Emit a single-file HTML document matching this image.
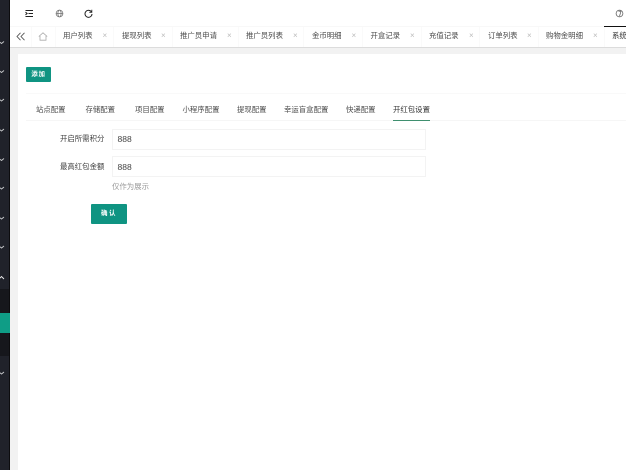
<!DOCTYPE html>
<html lang="zh">
<head>
<meta charset="utf-8">
<title>系统配置</title>
<style>
html,body{margin:0;padding:0;width:626px;height:470px;overflow:hidden;background:#fff}
body{position:relative;font-family:"Liberation Sans","Noto Sans CJK SC",sans-serif;font-size:7.4px;color:#4a4a4a}
.a{position:absolute;white-space:nowrap}
.t{line-height:10px;height:10px}
#wrap{position:absolute;left:0;top:0;width:626px;height:470px;overflow:hidden;filter:blur(.35px)}
.x{color:#bbb;font-size:8px}
.sep{position:absolute;top:27px;width:1px;height:20px;background:#fafafa}
</style>
</head>
<body>
<div id="wrap">
<!-- sidebar -->
<div class="a" style="left:0;top:0;width:9px;height:470px;background:#20222a"></div>
<div class="a" style="left:9px;top:0;width:1px;height:470px;background:#0c0c0e"></div>
<div class="a" style="left:0;top:289px;width:9px;height:67px;background:#16171c"></div>
<div class="a" style="left:0;top:313px;width:10px;height:20px;background:#0f9d86"></div>
<svg class="a" style="left:0;top:0" width="10" height="470" fill="none" stroke="#c8cacc" stroke-width=".9">
<path d="M-1 41.5l2.500 2 2.500-2M-1 70.500l2.500 2 2.500-2M-1 99l2.500 2 2.500-2M-1 129l2.500 2 2.500-2M-1 158.500l2.500 2 2.500-2M-1 187l2.500 2 2.500-2M-1 217l2.500 2 2.500-2M-1 246l2.500 2 2.500-2M-1 372l2.500 2 2.500-2"/>
<path d="M-1 279l2.500-2.500 2.500 2.500" stroke="#eee"/>
</svg>

<!-- background -->
<div class="a" style="left:10px;top:47px;width:616px;height:423px;background:#f2f2f2"></div>
<div class="a" style="left:10px;top:47px;width:616px;height:1px;background:#dcdcdc"></div>
<div class="a" style="left:18px;top:54px;width:608px;height:416px;background:#fff"></div>

<!-- header icons -->
<svg class="a" style="left:25px;top:9px" width="9" height="9" fill="none" stroke="#222" stroke-width="1">
<path d="M.5 1.500h7.500M3.500 4.500h4.500M.5 7.500h7.500M.5 3.200l1.600 1.300L.5 5.800"/>
</svg>
<svg class="a" style="left:55px;top:9px" width="9" height="9" fill="none" stroke="#777" stroke-width=".8">
<circle cx="4.500" cy="4.500" r="3.400"/><ellipse cx="4.500" cy="4.500" rx="1.600" ry="3.400"/><path d="M1.200 4.500h6.600"/>
</svg>
<svg class="a" style="left:84px;top:9px" width="9" height="9" fill="none" stroke="#222" stroke-width="1">
<path d="M7.500 3A3.500 3.500 0 1 0 8 5"/><path d="M7.800 .7V3.300H5.300" stroke-width=".9"/>
</svg>
<svg class="a" style="left:615px;top:9px" width="10" height="9" fill="none" stroke="#666" stroke-width=".8">
<circle cx="4.500" cy="4.500" r="3.400"/><path d="M3.500 2.200h2.500l-1.500 5"/>
</svg>

<!-- tab bar -->
<div class="a" style="left:10px;top:26px;width:616px;height:1px;background:#f8f8f8"></div>
<div class="a" style="left:604px;top:26px;width:22px;height:1px;background:#111"></div>
<svg class="a" style="left:16px;top:32px" width="10" height="9" fill="none" stroke="#555" stroke-width=".9">
<path d="M4.500 .8L1 4.500l3.500 3.700M8.500 .8L5 4.500l3.500 3.700"/>
</svg>
<svg class="a" style="left:38px;top:32px" width="10" height="9" fill="none" stroke="#aaa" stroke-width=".8">
<path d="M.8 4.500L5 .8l4.200 3.700M2 4V8.200h6V4"/>
</svg>
<div class="sep" style="left:31px"></div>
<div class="sep" style="left:55px"></div>
<div class="sep" style="left:113px"></div>
<div class="sep" style="left:172px"></div>
<div class="sep" style="left:238px"></div>
<div class="sep" style="left:303px"></div>
<div class="sep" style="left:362px"></div>
<div class="sep" style="left:421px"></div>
<div class="sep" style="left:479px"></div>
<div class="sep" style="left:538px"></div>
<div class="sep" style="left:604px"></div>

<div class="a t" style="left:63px;top:31px">用户列表</div><div class="a t x" style="left:102.500px;top:31px">×</div>
<div class="a t" style="left:122px;top:31px">提现列表</div><div class="a t x" style="left:161px;top:31px">×</div>
<div class="a t" style="left:180px;top:31px">推广员申请</div><div class="a t x" style="left:227px;top:31px">×</div>
<div class="a t" style="left:246px;top:31px">推广员列表</div><div class="a t x" style="left:293px;top:31px">×</div>
<div class="a t" style="left:312px;top:31px">金币明细</div><div class="a t x" style="left:351.500px;top:31px">×</div>
<div class="a t" style="left:370.500px;top:31px">开盒记录</div><div class="a t x" style="left:410px;top:31px">×</div>
<div class="a t" style="left:429px;top:31px">充值记录</div><div class="a t x" style="left:469px;top:31px">×</div>
<div class="a t" style="left:488px;top:31px">订单列表</div><div class="a t x" style="left:527px;top:31px">×</div>
<div class="a t" style="left:546px;top:31px">购物金明细</div><div class="a t x" style="left:593px;top:31px">×</div>
<div class="a t" style="left:612px;top:31px;color:#333">系统配置</div>

<!-- add button -->
<div class="a t" style="left:26px;top:67px;width:25px;height:15px;line-height:15px;background:#0f9482;color:#fff;text-align:center;font-size:6.500px;letter-spacing:.8px;font-weight:bold;border-radius:1px">添加</div>

<!-- section lines -->
<div class="a" style="left:26px;top:93px;width:600px;height:1px;background:#f9f9f9"></div>
<div class="a" style="left:26px;top:120px;width:600px;height:1px;background:#f6f6f6"></div>

<!-- sub tabs -->
<div class="a t" style="left:36px;top:105px">站点配置</div>
<div class="a t" style="left:85.500px;top:105px">存储配置</div>
<div class="a t" style="left:135px;top:105px">项目配置</div>
<div class="a t" style="left:182.500px;top:105px">小程序配置</div>
<div class="a t" style="left:237px;top:105px">提现配置</div>
<div class="a t" style="left:284px;top:105px">幸运盲盒配置</div>
<div class="a t" style="left:346px;top:105px">快递配置</div>
<div class="a t" style="left:393px;top:105px;color:#333">开红包设置</div>
<div class="a" style="left:393px;top:120px;width:37px;height:1px;background:#3f8f6f"></div>

<!-- form -->
<div class="a t" style="left:60px;top:134px;color:#3c3c3c">开启所需积分</div>
<div class="a" style="left:112px;top:129px;width:312px;height:19px;border:1px solid #f3f3f3"></div>
<div class="a t" style="left:117.500px;top:134px;color:#444;font-size:8.500px">888</div>

<div class="a t" style="left:60px;top:162px;color:#3c3c3c">最高红包金额</div>
<div class="a" style="left:112px;top:156px;width:312px;height:19px;border:1px solid #f3f3f3"></div>
<div class="a t" style="left:117.500px;top:162px;color:#444;font-size:8.500px">888</div>

<div class="a t" style="left:112px;top:182px;color:#999">仅作为展示</div>

<div class="a t" style="left:91px;top:204px;width:36px;height:20px;line-height:20px;background:#0f9482;color:#fff;text-align:center;font-size:6.500px;letter-spacing:1.500px;font-weight:bold;border-radius:1px">确认</div>
</div>
</body>
</html>
